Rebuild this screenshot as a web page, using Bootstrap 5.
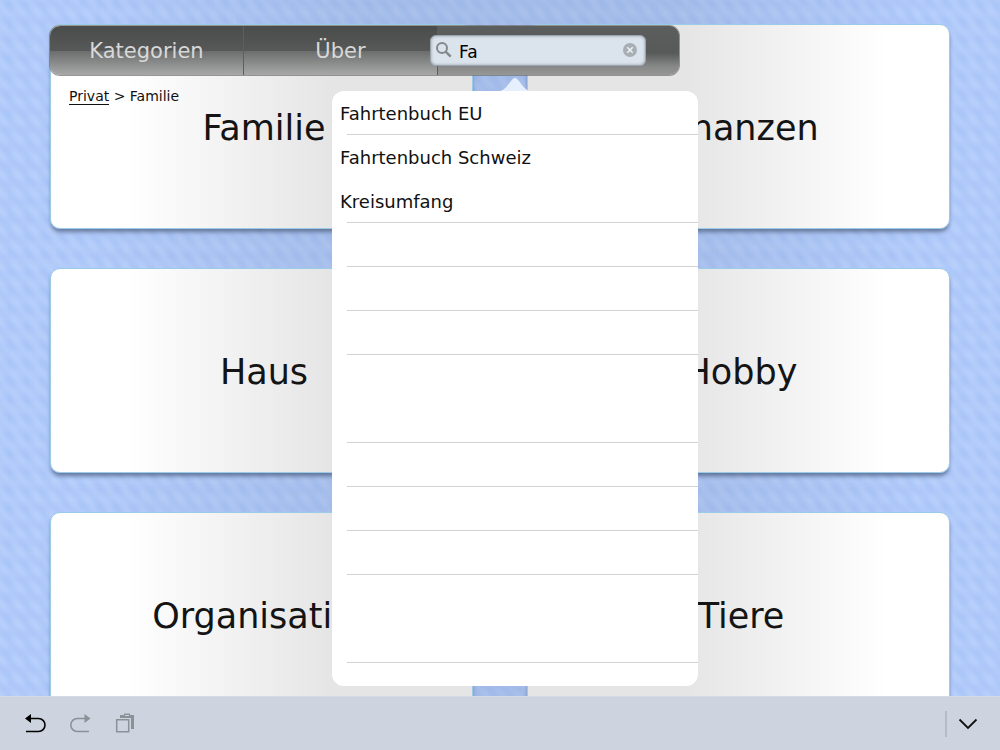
<!DOCTYPE html>
<html lang="de">
<head>
<meta charset="utf-8">
<meta name="viewport" content="width=device-width, initial-scale=1">
<title>Familie</title>
<link href="https://cdn.jsdelivr.net/npm/bootstrap@5.3.0/dist/css/bootstrap.min.css" rel="stylesheet">
<style>
body {
  font-family: "DejaVu Sans", Verdana, sans-serif;
  color: #141414;
  min-height: 100vh;
  background:
    linear-gradient(90deg, transparent 8%, rgba(100,115,150,.16) 36%, rgba(100,115,150,.16) 67%, transparent 92%),
    repeating-linear-gradient(50deg, rgba(255,255,255,.06) 0, rgba(110,155,225,.07) 6px, rgba(255,255,255,.06) 12px),
    repeating-linear-gradient(0deg, rgba(255,255,255,.04) 0, rgba(110,155,225,.04) 9px, rgba(255,255,255,.04) 18px),
    repeating-linear-gradient(90deg, rgba(255,255,255,.04) 0, rgba(110,155,225,.04) 9px, rgba(255,255,255,.04) 18px),
    #b0cafb;
}
.page { padding: 24px 50px 34px; }
.tiles { display: grid; grid-template-columns: 1fr 1fr; gap: 39px 54px; }
.tile {
  min-height: 205px;
  padding: 4px 0 0 5px;
  border: 1px solid #9bcbe9;
  border-radius: 10px;
  box-shadow: 0 4px 4px -1px rgba(50,65,95,.6);
  background: linear-gradient(90deg, #fff 18%, #e5e5e5 67%);
  font-size: 35px;
  color: #141414;
}
.tile:nth-child(even) { background: linear-gradient(270deg, #fff 15%, #e5e5e5 63%); }
.tile:hover { color: #141414; }
.topbar {
  position: absolute;
  top: 26px;
  left: 50px;
  width: 629px;
  height: 49px;
  z-index: 10;
  border-radius: 10px;
  box-shadow: 0 0 0 1px rgba(115,118,118,.75);
  background: linear-gradient(#4a4c4b, #575958 50%, #6d6f6e 52%, #a8a8a8);
}
.tab {
  width: 194px;
  padding-top: 4px;
  border: 0;
  border-right: 1px solid #5d5f5e;
  background: none;
  color: #d8d8d8;
  font-size: 21px;
}
.search-area {
  border-radius: 0 10px 10px 0;
  background: linear-gradient(#5c5e5d, #585a59 55%, #868887 82%, #969696);
}
.search-box { width: 216px; height: 31px; margin-left: -8px; }
.search-field {
  height: 31px;
  padding: 3px 28px 0 28px;
  border: 1px solid #9ba4ad;
  border-radius: 6px;
  background: #dbe3ec;
  box-shadow: inset 0 0 3px #8f9ba8;
  color: #000;
  font-size: 17px;
  line-height: 24px;
}
.search-field:focus { background: #dbe3ec; color: #000; }
.lens { position: absolute; left: 5px; top: 6px; line-height: 0; }
.clear { position: absolute; right: 9px; top: 8px; line-height: 0; }
.results {
  position: absolute;
  top: 56px;
  left: -98px;
  width: 366px;
  border-radius: 12px;
  background: #fff;
  padding-bottom: 23px;
}
.arrow { position: absolute; top: -13px; left: 168px; }
.results li { position: relative; height: 44px; padding-left: 8px; }
.results li.ruled::after {
  content: "";
  position: absolute;
  left: 15px;
  right: 0;
  bottom: 0;
  border-bottom: 1px solid #d2d2d4;
}
.results a { color: #111; font-size: 18px; }
.crumbs { position: absolute; top: 87px; left: 69px; font-size: 14px; line-height: 18px; color: #111; }
.crumbs a { color: #111; border-bottom: 1px solid #111; }
.keybar {
  height: 54px;
  gap: 22px;
  padding: 0 19px 0 22px;
  background: #ced4df;
  border-top: 1px solid #d6dae2;
}
.keybar .btn { line-height: 0; }
.keybar .btn:disabled { opacity: 1; border: 0; }
.keybar .hide-keys { margin-left: -14px; }
.rule { width: 2px; height: 26px; background: #b6bbc5; }
</style>
</head>
<body>
<header class="topbar d-flex">
  <button type="button" class="tab">Kategorien</button>
  <button type="button" class="tab">Über</button>
  <div class="search-area flex-grow-1 d-flex align-items-center">
    <form class="search-box position-relative" role="search">
      <input id="suche" type="text" class="search-field form-control" value="Fa" aria-label="Suche" autocomplete="off">
      <label for="suche" class="lens">
        <svg width="18" height="18" fill="none" stroke="#84898d" aria-hidden="true"><circle cx="7" cy="7" r="5" stroke-width="2"/><path d="M10.700 10.700l5 5" stroke-width="2.500"/></svg>
      </label>
      <button type="button" class="clear btn p-0 border-0" aria-label="Löschen">
        <svg width="14" height="14"><circle cx="7" cy="7" r="7" fill="#a9aeb5"/><path d="M4.300 4.300l5.400 5.400M9.700 4.300l-5.400 5.400" stroke="#edf1f5" stroke-width="1.600"/></svg>
      </button>
      <div class="results">
        <svg class="arrow" width="30" height="13"><path d="M0 13C7 12 11 0 15 0S23 12 30 13z" fill="#e6effe"/></svg>
        <ul class="list-unstyled mb-0">
          <li class="ruled d-flex align-items-center"><a class="text-decoration-none" href="#eu">Fahrtenbuch EU</a></li>
          <li class="d-flex align-items-center"><a class="text-decoration-none" href="#schweiz">Fahrtenbuch Schweiz</a></li>
          <li class="ruled d-flex align-items-center"><a class="text-decoration-none" href="#kreis">Kreisumfang</a></li>
          <li class="ruled"></li>
          <li class="ruled"></li>
          <li class="ruled"></li>
          <li></li>
          <li class="ruled"></li>
          <li class="ruled"></li>
          <li class="ruled"></li>
          <li class="ruled"></li>
          <li></li>
          <li class="ruled"></li>
        </ul>
      </div>
    </form>
  </div>
</header>
<nav class="crumbs" aria-label="Pfad"><a class="text-decoration-none" href="#privat">Privat</a> &gt; Familie</nav>
<main class="page">
  <div class="tiles">
    <a href="#familie" class="tile d-flex align-items-center justify-content-center text-decoration-none">Familie</a>
    <a href="#finanzen" class="tile d-flex align-items-center justify-content-center text-decoration-none">Finanzen</a>
    <a href="#haus" class="tile d-flex align-items-center justify-content-center text-decoration-none">Haus</a>
    <a href="#hobby" class="tile d-flex align-items-center justify-content-center text-decoration-none">Hobby</a>
    <a href="#organisation" class="tile d-flex align-items-center justify-content-center text-decoration-none">Organisation</a>
    <a href="#tiere" class="tile d-flex align-items-center justify-content-center text-decoration-none">Tiere</a>
  </div>
</main>
<footer class="keybar fixed-bottom d-flex align-items-center">
  <button type="button" class="btn p-0 border-0" aria-label="Rückgängig">
    <svg width="26" height="22" fill="none" stroke="#000" stroke-width="1.600"><path d="M8 5.500h8.500a6.500 6.500 0 0 1 0 13H4"/><path d="M3 5.500L9 1v9z" fill="#000" stroke="none"/></svg>
  </button>
  <button type="button" class="btn p-0 border-0" aria-label="Wiederholen" disabled>
    <svg width="22" height="22" fill="none" stroke="#8c9097" stroke-width="1.500"><path d="M15 5.500H7.300a6.500 6.500 0 0 0 0 13H19"/><path d="M20.500 5.500L14.500 1v9z" fill="#8c9097" stroke="none"/></svg>
  </button>
  <button type="button" class="btn p-0 border-0" aria-label="Einfügen" disabled>
    <svg width="22" height="22" fill="none" stroke="#8c9097"><path d="M2.700 6.700h12v12h-12z" stroke-width="1.500"/><path d="M6 4V2h4V0.500h6V2h4v14h-3V5H6z" fill="#8c9097" stroke="none"/><path d="M11 2.500h4" stroke="#ced4df"/></svg>
  </button>
  <span class="rule ms-auto"></span>
  <button type="button" class="hide-keys btn p-0 border-0" aria-label="Tastatur ausblenden">
    <svg width="26" height="20" fill="none" stroke="#111" stroke-width="1.800"><path d="M4.500 5.500l8.500 8.500 8.500-8.500"/></svg>
  </button>
</footer>
<script src="https://cdn.jsdelivr.net/npm/bootstrap@5.3.0/dist/js/bootstrap.bundle.min.js"></script>
</body>
</html>
